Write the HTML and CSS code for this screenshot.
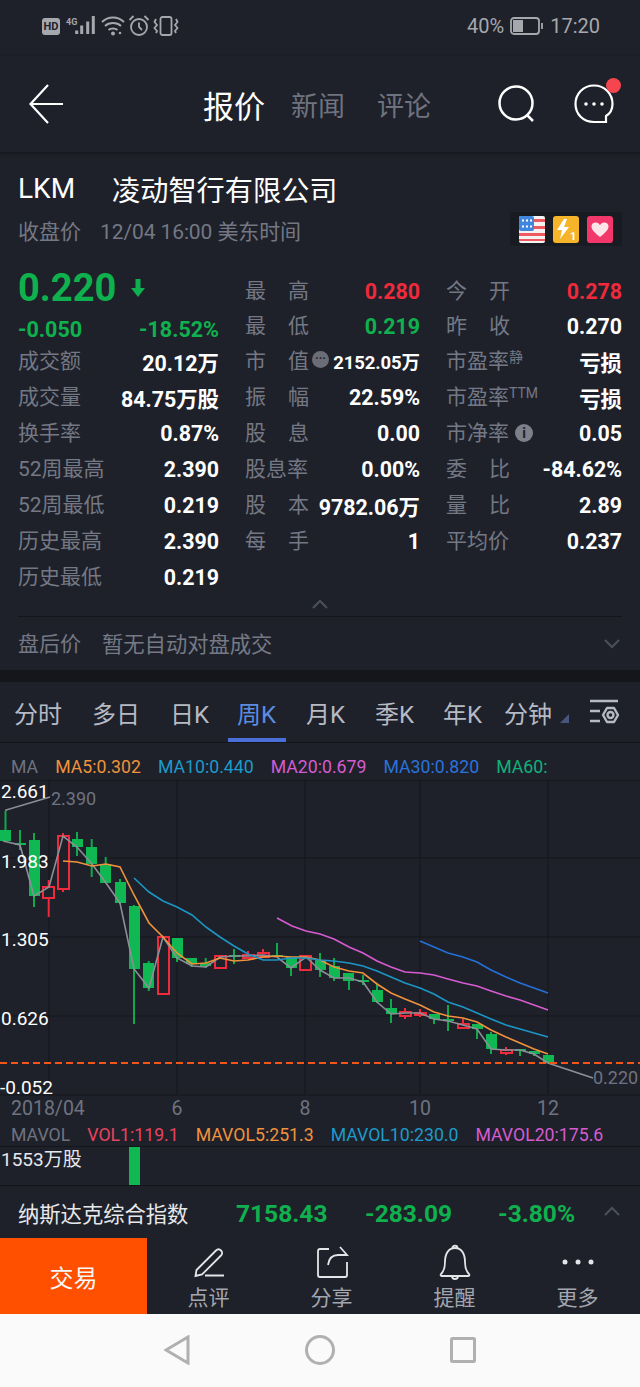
FILE: index.html
```html
<!DOCTYPE html>
<html lang="zh-CN">
<head>
  <meta charset="UTF-8">
  <meta name="viewport" content="width=device-width, initial-scale=1">
  <title>LKM 报价</title>
  <link rel="stylesheet" href="styles.css">
</head>
<body>

<div class="status-bar">
    <div class="status-left">
        <span class="hd-badge">HD</span>
        <svg class="signal" width="34" height="20" viewBox="0 0 34 20">
            <text x="2" y="9" class="signal-text">4G</text>
            <path d="M12.700 18v-3.500M17.700 18V9.500M23.700 18V5.500M29.300 18V0" />
        </svg>
        <svg class="status-icon" width="24" height="20" viewBox="0 0 24 20">
            <path d="M1 6c6-6 16-6 22 0M4 10c4-4 12-4 16 0M7.500 14c2-2 7-2 9 0" />
            <circle cx="12" cy="17.500" r="2" class="status-fill" />
            <circle cx="19" cy="17" r="1.300" class="status-fill" />
        </svg>
        <svg class="status-icon" width="22" height="22" viewBox="0 0 22 22">
            <circle cx="11" cy="12" r="8" />
            <path d="M11 7.500V12l3 3M1.500 5l4-4M20.500 5l-4-4" />
        </svg>
        <svg class="status-icon" width="26" height="20" viewBox="0 0 26 20">
            <rect x="7.500" y="1" width="11" height="18" rx="2" />
            <path d="M3 3L1.500 6 4 9 1.500 12 4 15l-1 2M23 3l1.500 3L22 9l2.500 3L22 15l1 2" />
        </svg>
    </div>
    <div class="status-right">
        <span>40%</span>
        <svg class="status-icon" width="34" height="20" viewBox="0 0 34 20">
            <rect x="1" y="2" width="28" height="16" rx="3" />
            <rect x="3" y="4" width="10" height="12" class="status-fill" />
            <path d="M32 7v6" />
        </svg>
        <span>17:20</span>
    </div>
</div>

<nav class="top-nav">
    <svg class="back-icon" width="36" height="40" viewBox="0 0 36 40">
        <path d="M34 20H2M19 1L1.500 20 19 39" />
    </svg>
    <div class="top-tabs">
        <span class="top-tab active">报价</span>
        <span class="top-tab">新闻</span>
        <span class="top-tab">评论</span>
    </div>
    <svg class="search-icon" width="38" height="38" viewBox="0 0 38 38">
        <circle cx="18" cy="18" r="16.500" />
        <path d="M29 30l6 6" />
    </svg>
    <div class="chat-wrap">
        <svg class="chat-icon" width="40" height="40" viewBox="0 0 40 40">
            <path d="M32 38H20C9 38 1.500 30 1.500 20S9 1.500 20 1.500 38.500 10 38.500 20c0 5-1.500 9-6.500 12z" />
            <circle cx="12" cy="20" r="1.800" />
            <circle cx="20" cy="20" r="1.800" />
            <circle cx="28" cy="20" r="1.800" />
        </svg>
        <span class="chat-dot"></span>
    </div>
</nav>

<section class="quote">
    <div class="title-row">
        <span class="ticker">LKM</span>
        <span class="company">凌动智行有限公司</span>
    </div>
    <div class="sub-row">
        <span class="close-label">收盘价</span>
        <span class="close-time">12/04 16:00 美东时间</span>
        <div class="badges">
            <svg width="26" height="27" viewBox="0 0 26 27">
                <rect width="26" height="27" rx="2" fill="#f3f3f3" />
                <path d="M14 3h12v3H14zM14 10h12v3H14zM0 17h26v3H0zM0 23h26v2H0z" fill="#ee5a5f" />
                <rect width="15" height="15" rx="2" fill="#3f86dc" />
                <path d="M3 3.500h2v2H3zM7 3.500h2v2H7zM11 3.500h2v2h-2zM3 9.500h2v2H3zM7 9.500h2v2H7zM11 9.500h2v2h-2z" fill="#fff" />
            </svg>
            <svg width="26" height="27" viewBox="0 0 26 27">
                <rect width="26" height="27" rx="3" fill="#f6b42a" />
                <path d="M11 3L4 14h5l-2 9 9-12h-5l3-8z" fill="#fff" />
                <text x="17" y="24" class="badge-num">1</text>
            </svg>
            <svg width="26" height="27" viewBox="0 0 26 27">
                <rect width="26" height="27" rx="3" fill="#f2386b" />
                <path d="M13 21C8 17 4.500 14 4.500 10.500 4.500 6 10.500 5 13 9c2.500-4 8.500-3 8.500 1.500C21.500 14 18 17 13 21z" fill="#fde4ea" />
            </svg>
        </div>
    </div>

    <div class="stats">
        <div class="stat-col stat-left">
            <div class="price-row">
                <span class="price">0.220</span>
                <svg class="price-arrow" width="16" height="20" viewBox="0 0 16 20">
                    <path d="M5.500 1h5v9H15l-7 9-7-9h4.500z" />
                </svg>
            </div>
            <div class="change-row">
                <span>-0.050</span>
                <span>-18.52%</span>
            </div>
            <div class="stat"><span class="label">成交额</span><span class="value">20.12万</span></div>
            <div class="stat"><span class="label">成交量</span><span class="value">84.75万股</span></div>
            <div class="stat"><span class="label">换手率</span><span class="value">0.87%</span></div>
            <div class="stat"><span class="label">52周最高</span><span class="value">2.390</span></div>
            <div class="stat"><span class="label">52周最低</span><span class="value">0.219</span></div>
            <div class="stat"><span class="label">历史最高</span><span class="value">2.390</span></div>
            <div class="stat"><span class="label">历史最低</span><span class="value">0.219</span></div>
        </div>

        <div class="stat-col stat-mid">
            <div class="stat"><span class="label spread"><i>最</i><i>高</i></span><span class="value red">0.280</span></div>
            <div class="stat"><span class="label spread"><i>最</i><i>低</i></span><span class="value green">0.219</span></div>
            <div class="stat">
                <span class="label spread"><i>市</i><i>值</i></span>
                <span class="more-dot">···</span>
                <span class="value tight">2152.05万</span>
            </div>
            <div class="stat"><span class="label spread"><i>振</i><i>幅</i></span><span class="value">22.59%</span></div>
            <div class="stat"><span class="label spread"><i>股</i><i>息</i></span><span class="value">0.00</span></div>
            <div class="stat"><span class="label spread">股息率</span><span class="value">0.00%</span></div>
            <div class="stat"><span class="label spread"><i>股</i><i>本</i></span><span class="value">9782.06万</span></div>
            <div class="stat"><span class="label spread"><i>每</i><i>手</i></span><span class="value">1</span></div>
        </div>

        <div class="stat-col stat-right">
            <div class="stat"><span class="label spread"><i>今</i><i>开</i></span><span class="value red">0.278</span></div>
            <div class="stat"><span class="label spread"><i>昨</i><i>收</i></span><span class="value">0.270</span></div>
            <div class="stat"><span class="label">市盈率<sup>静</sup></span><span class="value">亏损</span></div>
            <div class="stat"><span class="label">市盈率<sup>TTM</sup></span><span class="value">亏损</span></div>
            <div class="stat"><span class="label">市净率<span class="info-dot">i</span></span><span class="value">0.05</span></div>
            <div class="stat"><span class="label spread"><i>委</i><i>比</i></span><span class="value">-84.62%</span></div>
            <div class="stat"><span class="label spread"><i>量</i><i>比</i></span><span class="value">2.89</span></div>
            <div class="stat"><span class="label">平均价</span><span class="value">0.237</span></div>
        </div>
    </div>

    <div class="collapse-row">
        <svg class="chevron" width="16" height="10" viewBox="0 0 16 10"><path d="M1 9l7-7 7 7" /></svg>
    </div>

    <div class="after-hours">
        <span class="label">盘后价</span>
        <span class="after-text">暂无自动对盘成交</span>
        <svg class="chevron after-chevron" width="16" height="10" viewBox="0 0 16 10"><path d="M1 1l7 7 7-7" /></svg>
    </div>
</section>

<div class="chart-tabs">
    <span class="chart-tab tab-1">分时</span>
    <span class="chart-tab tab-2">多日</span>
    <span class="chart-tab tab-3">日K</span>
    <span class="chart-tab tab-4 active">周K</span>
    <span class="chart-tab tab-5">月K</span>
    <span class="chart-tab tab-6">季K</span>
    <span class="chart-tab tab-7">年K</span>
    <span class="chart-tab tab-8">分钟<i class="corner"></i></span>
    <svg class="settings-icon" width="32" height="28" viewBox="0 0 32 28">
        <path d="M1 2h28M1 12h10M1 22h10" />
        <path d="M18 9h7l4 7-4 7h-7l-4-7z" />
        <circle cx="21.500" cy="16" r="3" />
    </svg>
</div>

<div class="legend">
    <span class="legend-title">MA</span>
    <span class="c-orange">MA5:0.302</span>
    <span class="c-teal">MA10:0.440</span>
    <span class="c-pink">MA20:0.679</span>
    <span class="c-blue">MA30:0.820</span>
    <span class="c-green">MA60:</span>
</div>

<svg class="kline" width="640" height="340" viewBox="0 0 640 340">
    <path class="grid-line" d="M0 .5H640M0 78H640M0 157H640M0 236H640M0 315H640M49 0V315M177 0V315M305 0V315M420 0V315M548 0V315" />

    <path class="wick-green" d="M5.500 31V50M20 50V70M34 53V127M77 52V76M91.700 59V97M105.700 77V103M120 99V124M134 125V244M148.700 181V211M177 158V182M191.700 178V187M205.700 178V188M234 169V184M277 163V177M291 177V196M320 173V197M334 178V201M349 193V210M363 195V205M377 203V223M391 219V243M434 234V244M448 225V251M477 244V259M491 252V274M520 269V276M534 271V276" />
    <path class="wick-red" d="M48.700 100V137M63 53V112M248 171V179M263 169V178M405 228V239M420 229V237M463 239V249M506 267V275" />

    <g class="body-green">
        <rect x="0" y="50" width="11" height="11" />
        <rect x="15" y="63" width="11" height="2" />
        <rect x="29" y="60" width="11" height="56" />
        <rect x="72" y="59" width="11" height="8" />
        <rect x="86" y="67" width="11" height="17" />
        <rect x="100" y="84" width="11" height="19" />
        <rect x="115" y="102" width="11" height="21" />
        <rect x="129" y="126" width="11" height="63" />
        <rect x="143" y="183" width="11" height="25" />
        <rect x="172" y="158" width="11" height="20" />
        <rect x="186" y="178" width="11" height="6" />
        <rect x="200" y="183" width="11" height="3" />
        <rect x="229" y="175" width="11" height="2" />
        <rect x="272" y="175" width="11" height="2" />
        <rect x="286" y="177" width="11" height="11" />
        <rect x="315" y="180" width="11" height="10" />
        <rect x="329" y="186" width="11" height="12" />
        <rect x="343" y="193" width="11" height="8" />
        <rect x="358" y="200" width="11" height="2" />
        <rect x="372" y="210" width="11" height="12" />
        <rect x="386" y="228" width="11" height="6" />
        <rect x="429" y="234" width="11" height="5" />
        <rect x="443" y="239" width="11" height="2" />
        <rect x="472" y="244" width="11" height="5" />
        <rect x="486" y="254" width="11" height="15" />
        <rect x="515" y="269" width="11" height="2" />
        <rect x="529" y="271" width="11" height="3" />
        <rect x="543" y="275" width="11" height="8" />
    </g>
    <g class="body-red">
        <rect x="43" y="107" width="11" height="11" />
        <rect x="58" y="56" width="11" height="53" />
        <rect x="158" y="157" width="11" height="57" />
        <rect x="215" y="176" width="11" height="12" />
        <rect x="243" y="175" width="11" height="3" />
        <rect x="258" y="173" width="11" height="4" />
        <rect x="300" y="176" width="11" height="14" />
        <rect x="400" y="232" width="11" height="4" />
        <rect x="415" y="233" width="11" height="2" />
        <rect x="458" y="244" width="11" height="4" />
        <rect x="501" y="270" width="11" height="3" />
    </g>

    <polyline class="line line-close" points="3,61 20,65 34,116 49,107 63,56 77,67 92,84 106,103 120,123 134,189 149,208 163,157 177,178 192,186 206,187 220,177 234,176 248,176 263,175 277,177 291,188 306,177 320,190 334,198 349,198 363,202 377,222 391,234 405,233 420,233 434,239 448,241 463,245 477,249 491,269 506,270 520,270 534,274 548,283 593,298" />
    <polyline class="line line-orange" points="63,81 77,82 92,86 106,84 120,87 134,115 149,143 163,157 177,173 192,184 206,183 220,178 234,181 248,180 263,177 277,176 291,177 306,177 320,180 334,187 349,191 363,193 377,204 391,213 405,219 420,225 434,232 448,236 463,238 477,242 491,250 506,257 520,263 534,269 548,274" />
    <polyline class="line line-teal" points="134,98 149,112 163,121 177,127 192,135 206,147 220,157 234,166 248,174 263,180 277,180 291,178 306,178 320,180 334,181 349,183 363,186 377,191 391,197 405,203 420,208 434,214 448,222 463,227 477,233 491,239 506,245 520,249 534,253 548,257" />
    <polyline class="line line-pink" points="277,138 292,146 306,151 320,154 334,159 349,167 363,173 377,181 391,187 405,192 420,193 434,195 448,199 463,203 477,206 491,211 506,216 520,220 534,225 548,230" />
    <polyline class="line line-blue" points="420,161 434,167 448,173 463,177 477,182 491,190 506,197 520,203 534,208 548,213" />

    <path class="price-line" d="M0 283H640" />
    <polyline class="line line-close" points="6,31 6,30 50,17" />

    <text class="axis-price" x="1" y="18">2.661</text>
    <text class="axis-price" x="1" y="88">1.983</text>
    <text class="axis-price" x="1" y="166">1.305</text>
    <text class="axis-price" x="1" y="245">0.626</text>
    <text class="axis-price" x="0" y="314">-0.052</text>
    <text class="axis-note" x="51" y="25">2.390</text>
    <text class="axis-note" x="593" y="304">0.220</text>
    <text class="axis-date" x="11" y="335">2018/04</text>
    <text class="axis-date" x="177" y="335" text-anchor="middle">6</text>
    <text class="axis-date" x="305" y="335" text-anchor="middle">8</text>
    <text class="axis-date" x="420" y="335" text-anchor="middle">10</text>
    <text class="axis-date" x="548" y="335" text-anchor="middle">12</text>
</svg>

<div class="legend vol-legend">
    <span class="legend-title">MAVOL</span>
    <span class="c-red">VOL1:119.1</span>
    <span class="c-orange">MAVOL5:251.3</span>
    <span class="c-teal">MAVOL10:230.0</span>
    <span class="c-pink">MAVOL20:175.6</span>
</div>

<div class="volume">
    <span class="volume-label">1553万股</span>
    <span class="volume-bar"></span>
</div>

<div class="index-bar">
    <span class="index-name">纳斯达克综合指数</span>
    <span class="index-val val-1">7158.43</span>
    <span class="index-val val-2">-283.09</span>
    <span class="index-val val-3">-3.80%</span>
    <svg class="chevron index-chevron" width="16" height="10" viewBox="0 0 16 10"><path d="M1 9l7-7 7 7" /></svg>
</div>

<div class="toolbar">
    <div class="trade-btn">交易</div>
    <div class="tool">
        <svg width="34" height="36" viewBox="0 0 34 36">
            <path d="M3.500 32l1-6L24 6.500c1.500-1.500 3.500-1.500 5 0s1.500 3.500 0 5L10 30.500zM13 31.500h19" />
        </svg>
        <span>点评</span>
    </div>
    <div class="tool">
        <svg width="34" height="36" viewBox="0 0 34 36">
            <path d="M14 5H5C3.500 5 3 6 3 7v24c0 1 .5 2 2 2h25c1 0 2-1 2-2V18" />
            <path d="M13 21c1-7 5-10 10-10h9L25 3" />
        </svg>
        <span>分享</span>
    </div>
    <div class="tool">
        <svg width="34" height="36" viewBox="0 0 34 36">
            <path d="M3 30c3-3 4-6 4-12C7 9 11 4 17 4s10 5 10 14c0 6 1 9 4 12 .8.9.3 2-1 2H4c-1.300 0-1.800-1.100-1-2z" />
            <path d="M14.500 4c0-3.300 5-3.300 5 0M14 32c0 4 6 4 6 0" />
        </svg>
        <span>提醒</span>
    </div>
    <div class="tool">
        <svg width="34" height="36" viewBox="0 0 34 36">
            <circle cx="4" cy="18" r="2.500" class="tool-fill" />
            <circle cx="17" cy="18" r="2.500" class="tool-fill" />
            <circle cx="30" cy="18" r="2.500" class="tool-fill" />
        </svg>
        <span>更多</span>
    </div>
</div>

<div class="system-nav">
    <svg width="26" height="30" viewBox="0 0 26 30"><path d="M24 2v26L2 15z" /></svg>
    <svg width="30" height="30" viewBox="0 0 30 30"><circle cx="15" cy="15" r="13.500" /></svg>
    <svg width="26" height="26" viewBox="0 0 26 26"><rect x="1.500" y="1.500" width="23" height="23" rx="1" /></svg>
</div>

</body>
</html>
```

FILE: styles.css
```css
:root {
    --bg-color: #1e212a;
    --dark-band: #14161b;
    --line-color: #14161c;
    --label-color: #747884;
    --text-color: #fff;
    --green: #0fb14e;
    --red: #ee2a3c;
    --cjk: Roboto, "Noto Sans CJK SC", sans-serif;
}

* {
    margin: 0;
    padding: 0;
    box-sizing: border-box;
}

body {
    width: 640px;
    height: 1387px;
    overflow: hidden;
    background: var(--bg-color);
    color: var(--text-color);
    font-family: var(--cjk);
}

/* status bar */
.status-bar {
    height: 56px;
    padding: 0 40px 4px 42px;
    display: flex;
    align-items: center;
    justify-content: space-between;
    color: #a6a8ad;
    font-size: 20px;
}

.status-left,
.status-right {
    display: flex;
    align-items: center;
    gap: 3px;
}

.status-right {
    gap: 6px;
}

.hd-badge {
    width: 18px;
    height: 17px;
    border-radius: 3px;
    background: #a6a8ad;
    color: var(--bg-color);
    font-size: 11px;
    font-weight: 700;
    line-height: 17px;
    text-align: center;
}

.signal {
    margin-left: 1px;
}

.signal path {
    stroke: #a6a8ad;
    stroke-width: 3;
    fill: none;
}

.signal-text {
    fill: #a6a8ad;
    font-size: 9px;
    font-weight: 700;
}

.status-icon {
    fill: none;
    stroke: #a6a8ad;
    stroke-width: 1.800;
}

.status-fill {
    fill: #a6a8ad;
    stroke: none;
}

/* top nav */
.top-nav {
    height: 96px;
    padding: 0 0 0 29px;
    display: flex;
    align-items: center;
    box-shadow: 0 1px 3px #14161b;
    position: relative;
}

.top-nav svg,
.top-tabs,
.chat-wrap {
    flex-shrink: 0;
}

.back-icon {
    fill: none;
    stroke: #fff;
    stroke-width: 2.200;
}

.top-tabs {
    margin-left: 138px;
    display: flex;
    align-items: center;
    width: 228px;
    white-space: nowrap;
}

.top-tab {
    font-size: 27px;
    color: #6f7380;
    margin-right: 32px;
}

.top-tab:last-child {
    margin-right: 0;
}

.top-tab.active {
    font-size: 31px;
    color: #fff;
    margin-right: 26px;
}

.search-icon {
    margin-left: 67px;
    fill: none;
    stroke: #fff;
    stroke-width: 2.500;
}

.chat-wrap {
    position: relative;
    margin-left: 38px;
    display: flex;
}

.chat-icon {
    fill: none;
    stroke: #fff;
    stroke-width: 2.200;
}

.chat-icon circle {
    fill: #fff;
    stroke: none;
}

.chat-dot {
    position: absolute;
    top: -6px;
    right: -7px;
    width: 15px;
    height: 15px;
    border-radius: 50%;
    background: #f5454f;
}

/* quote */
.quote {
    height: 518px;
    padding: 0 18px;
}

.title-row {
    height: 64px;
    padding-top: 8px;
    display: flex;
    align-items: center;
}

.ticker {
    font-size: 28px;
    width: 94px;
}

.company {
    font-size: 28.200px;
}

.sub-row {
    height: 28px;
    display: flex;
    align-items: center;
    color: var(--label-color);
    font-size: 21px;
    position: relative;
}

.close-label {
    width: 82px;
}

.close-time {
    font-size: 21px;
    letter-spacing: -.1px;
}

.badges {
    margin-left: auto;
    width: 112px;
    height: 34px;
    padding: 0 9px;
    display: flex;
    align-items: center;
    justify-content: space-between;
    background: #191b22;
    position: relative;
    top: -1px;
}

.badge-num {
    fill: #fff;
    font-size: 11px;
    font-weight: 700;
}

.stats {
    margin-top: 25px;
    display: flex;
    justify-content: space-between;
}

.stat-col {
    display: flex;
    flex-direction: column;
}

.stat-left {
    width: 201px;
}

.stat-mid {
    width: 175px;
    margin-left: 26px;
    padding-top: 2px;
}

.stat-right {
    width: 176px;
    margin-left: 26px;
    padding-top: 2px;
}

.stat {
    height: 36px;
    display: flex;
    align-items: center;
    justify-content: space-between;
    position: relative;
}

.stat-mid .stat:nth-child(2),
.stat-right .stat:nth-child(2) {
    height: 34px;
}

.label {
    font-size: 21px;
    color: var(--label-color);
    white-space: nowrap;
}

.label i {
    font-style: normal;
}

.label.spread {
    width: 64px;
    display: flex;
    justify-content: space-between;
}

.label sup {
    font-size: 14px;
    vertical-align: 6px;
    line-height: 0;
}

.value {
    font-size: 21.400px;
    font-weight: 700;
    color: #fff;
    white-space: nowrap;
    position: relative;
    top: 2px;
}

.value.tight {
    font-size: 18.500px;
    letter-spacing: -.1px;
}

.value.red {
    color: var(--red);
}

.value.green {
    color: var(--green);
}

.more-dot {
    position: absolute;
    left: 67px;
    top: 10px;
    width: 17px;
    height: 17px;
    border-radius: 50%;
    background: #6a6d76;
    color: #24262e;
    font-size: 12px;
    font-weight: 700;
    line-height: 16px;
    text-align: center;
}

.info-dot {
    display: inline-block;
    width: 18px;
    height: 18px;
    margin-left: 6px;
    border-radius: 50%;
    background: #7d808a;
    color: #1e212a;
    font-size: 14px;
    font-weight: 700;
    line-height: 18px;
    text-align: center;
    vertical-align: 2px;
}

.price-row {
    height: 36px;
    display: flex;
    align-items: center;
    gap: 14px;
    position: relative;
    top: 1px;
}

.price {
    font-size: 38px;
    font-weight: 700;
    color: var(--green);
}

.change-row {
    height: 36px;
    padding-top: 12px;
    display: flex;
    align-items: center;
    justify-content: space-between;
    font-size: 21.500px;
    font-weight: 700;
    color: var(--green);
}

.price-arrow {
    fill: var(--green);
}

.chevron {
    fill: none;
    stroke: #4c505b;
    stroke-width: 2;
}

.collapse-row {
    height: 16px;
    display: flex;
    justify-content: center;
    align-items: flex-end;
}

.after-hours {
    margin-top: 7px;
    height: 53px;
    padding-bottom: 2px;
    border-top: 1px solid #14161c;
    display: flex;
    align-items: center;
}

.after-hours .label {
    width: 84px;
}

.after-text {
    font-size: 21.300px;
    color: #767a86;
}

.after-chevron {
    margin-left: auto;
    margin-right: 2px;
    position: relative;
    top: 2px;
}

/* chart tabs */
.chart-tabs {
    height: 73px;
    border-top: 12px solid var(--dark-band);
    border-bottom: 1px solid #14161c;
    position: relative;
    display: flex;
    align-items: center;
    font-size: 24px;
    color: #b6bac4;
}

.chart-tab {
    position: absolute;
    top: 13px;
    white-space: nowrap;
}

.tab-1 { left: 14px; }
.tab-2 { left: 92px; }
.tab-3 { left: 170px; }
.tab-4 { left: 237px; }
.tab-5 { left: 306px; }
.tab-6 { left: 375px; }
.tab-7 { left: 443px; }
.tab-8 { left: 504px; }

.chart-tab.active {
    color: #5b8ce2;
}

.chart-tab.active::after {
    content: "";
    position: absolute;
    left: -9px;
    bottom: -12px;
    width: 58px;
    height: 4px;
    background: #4a6fd8;
}

.corner {
    position: absolute;
    right: -17px;
    bottom: 7px;
    border-style: solid;
    border-width: 0 0 9px 9px;
    border-color: transparent transparent #46567c transparent;
}

.settings-icon {
    position: absolute;
    left: 589px;
    top: 17px;
    fill: none;
    stroke: #b6bac4;
    stroke-width: 2.400;
    stroke-linejoin: round;
}

/* legend rows */
.legend {
    height: 37px;
    padding: 10px 0 0 11px;
    display: flex;
    align-items: center;
    gap: 17px;
    font-size: 17.700px;
    white-space: nowrap;
}

.legend-title {
    color: #6f7380;
}

.c-orange { color: #f0923c; }
.c-teal { color: #1c9bcb; }
.c-pink { color: #d65bd0; }
.c-blue { color: #2a72dc; }
.c-green { color: #10b27c; }
.c-red { color: #e8445f; }

.kline {
    display: block;
}

.grid-line {
    fill: none;
    stroke: #15171d;
    stroke-width: 1;
}

.wick-green {
    stroke: #0fa94b;
    stroke-width: 2;
    fill: none;
}

.wick-red {
    stroke: var(--red);
    stroke-width: 2;
    fill: none;
}

.body-green rect {
    fill: #0fb853;
}

.body-red rect {
    fill: #1e212a;
    stroke: var(--red);
    stroke-width: 2;
}

.line {
    fill: none;
    stroke-width: 1.600;
}

.line-close { stroke: #8c8f98; }
.line-orange { stroke: #f0923c; }
.line-teal { stroke: #1c95c4; }
.line-pink { stroke: #d65bd0; }
.line-blue { stroke: #2470d8; }

.price-line {
    fill: none;
    stroke: #f4561a;
    stroke-width: 2.200;
    stroke-dasharray: 7 4;
}

.kline text {
    font-family: Roboto, sans-serif;
    font-size: 19px;
}

.axis-price {
    fill: #fff;
}

.axis-note,
.axis-date {
    fill: #6f7380;
}

.kline .axis-note {
    font-size: 18px;
}

.kline .axis-date {
    font-size: 19.500px;
}

.vol-legend {
    height: 27px;
    padding: 4px 0 0 11px;
    border-bottom: 1px solid #14161c;
}

.volume {
    height: 39px;
    position: relative;
    border-bottom: 1px solid #14161c;
}

.volume-label {
    position: absolute;
    left: 1px;
    top: -3px;
    font-size: 19px;
    color: #e8e8ea;
}

.volume-bar {
    position: absolute;
    left: 129px;
    top: 0;
    width: 11px;
    height: 38px;
    background: #0fb853;
}

/* index bar */
.index-bar {
    height: 52px;
    position: relative;
    display: flex;
    align-items: center;
    padding-left: 18px;
}

.index-name {
    font-size: 21.300px;
    color: #e8e8ea;
}

.index-val {
    position: absolute;
    top: 13px;
    font-size: 24.500px;
    font-weight: 700;
    color: var(--green);
}

.val-1 { left: 236px; }
.val-2 { left: 365px; }
.val-3 { left: 498px; }

.index-chevron {
    position: absolute;
    left: 604px;
    top: 20px;
}

/* bottom toolbar */
.toolbar {
    height: 76px;
    display: flex;
    align-items: stretch;
}

.trade-btn {
    width: 147px;
    background: #ff5000;
    color: #f7f7f7;
    font-size: 24px;
    display: flex;
    align-items: center;
    justify-content: center;
}

.tool {
    width: 123px;
    padding-top: 6px;
    display: flex;
    flex-direction: column;
    align-items: center;
    color: #a3a6ae;
    font-size: 21px;
    line-height: 30px;
}

.tool svg {
    fill: none;
    stroke: #e4e5e8;
    stroke-width: 1.800;
    margin-bottom: 3px;
    flex-shrink: 0;
}

.tool .tool-fill {
    fill: #e4e5e8;
    stroke: none;
}

/* android nav */
.system-nav {
    height: 73px;
    background: #fafafa;
    position: relative;
    display: flex;
    align-items: center;
    justify-content: center;
    gap: 115px;
    padding-bottom: 2px;
}

.system-nav svg {
    fill: none;
    stroke: #b0b0b0;
    stroke-width: 3;
}
```
